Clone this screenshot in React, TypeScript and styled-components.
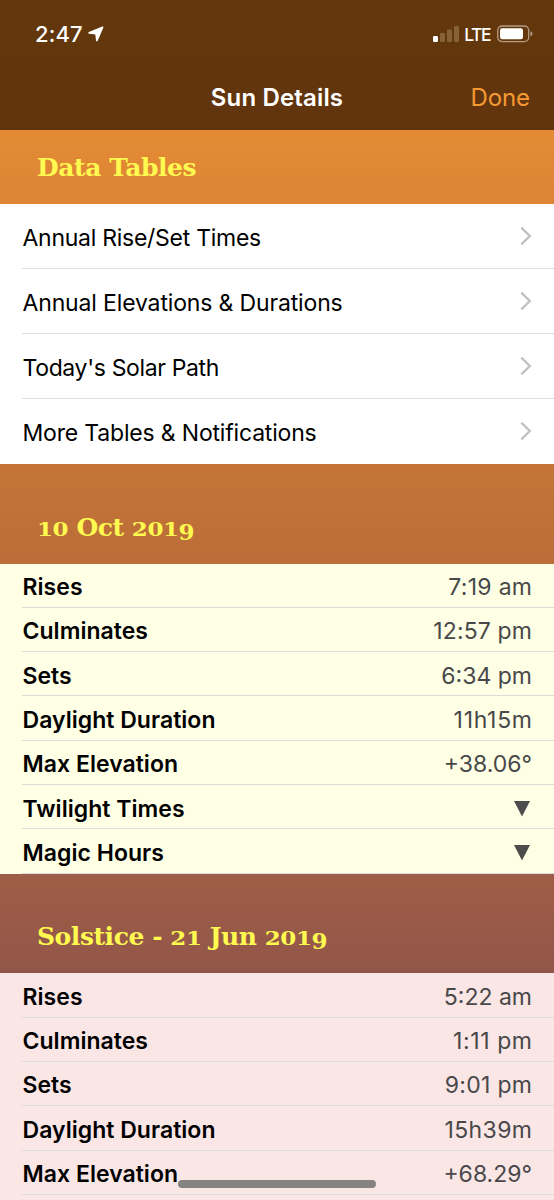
import React from "react";
import styled, { createGlobalStyle } from "styled-components";

const GlobalStyle = createGlobalStyle`
  * { box-sizing: border-box; }
  html, body { margin: 0; padding: 0; height: 1200px; overflow: hidden; }
  body { font-family: Inter, "Liberation Sans", sans-serif; }
`;

const Screen = styled.div`
  position: relative;
  width: 554px;
  height: 1200px;
  overflow: hidden;
  background: linear-gradient(#e88f32 0px, #e38b34 130px, #dd8435 204px, #c47536 464px, #bb6d3a 564px, #9f5d46 874px, #925649 974px, #7d4a50 1200px);
`;

const Header = styled.header`
  height: 130px;
  background: linear-gradient(#64380b, #61340e);
  color: #fff;
`;

const StatusBar = styled.div`
  height: 68px;
  padding: 0 21px 0 35px;
  display: flex;
  justify-content: space-between;
  align-items: center;
`;

const StatusGroup = styled.div`
  display: flex;
  align-items: center;
`;

const Clock = styled.span`
  font-size: 22px;
  font-weight: 500;
  line-height: 26px;
  letter-spacing: 0.15px;
`;

const Network = styled.span`
  font-size: 17.5px;
  font-weight: 500;
  line-height: 22px;
  letter-spacing: -1.5px;
  margin: 1px 7px 0 4px;
`;

const NavBar = styled.div`
  height: 60px;
  padding: 0 24px;
  display: grid;
  grid-template-columns: 1fr auto 1fr;
  align-items: center;
`;

const NavTitle = styled.h1`
  grid-column: 2;
  margin: 0;
  font-size: 24px;
  font-weight: 600;
  line-height: 60px;
  letter-spacing: 0.15px;
`;

const DoneButton = styled.button`
  justify-self: end;
  border: 0;
  padding: 0;
  background: none;
  color: #f59a33;
  font: 400 24px/60px Inter, sans-serif;
  letter-spacing: -0.1px;
`;

const SectionHeader = styled.div<{ $height: number }>`
  height: ${(p) => p.$height}px;
  padding: 0 37px 21px;
  display: flex;
  align-items: flex-end;
`;

const SectionTitle = styled.h2<{ $spacing: number }>`
  margin: 0;
  color: #fffa50;
  font-family: "DejaVu Serif", serif;
  font-size: 25px;
  font-weight: 700;
  line-height: 30px;
  white-space: pre;
  letter-spacing: ${(p) => p.$spacing}px;
`;

/* Old-style figures: 0, 1 and 2 stand at x-height, 9 hangs below the baseline. */
const Digit = styled.span<{ $low: boolean }>`
  display: inline-block;
  font-size: 23px;
  line-height: 23px;
  transform-origin: 0 19px;
  transform: ${(p) => (p.$low ? "translateY(4px)" : "scaleY(0.83)")};
`;

const List = styled.div<{ $tint: string }>`
  background: ${(p) => p.$tint};
  padding-left: 22px;
`;

const MenuRow = styled.div`
  height: 65px;
  padding: 4px 22px 0 0.5px;
  display: flex;
  align-items: center;
  justify-content: space-between;
  border-bottom: 1px solid #dcdce2;
  &:last-child { border-bottom-color: transparent; }
`;

const MenuLabel = styled.span<{ $spacing: number }>`
  font-size: 23px;
  line-height: 28px;
  color: #000;
  letter-spacing: ${(p) => p.$spacing}px;
`;

const DetailRow = styled.div`
  height: 44.3px;
  padding: 3.6px 22px 0 0.5px;
  display: flex;
  align-items: center;
  justify-content: space-between;
  border-bottom: 1px solid #dcdadb;
`;

const DetailLabel = styled.span`
  font-size: 23px;
  font-weight: 600;
  line-height: 28px;
  letter-spacing: 0.03px;
  color: #000;
`;

const DetailValue = styled.span<{ $spacing: number }>`
  font-size: 23px;
  line-height: 28px;
  color: #48484a;
  letter-spacing: ${(p) => p.$spacing}px;
  margin-right: ${(p) => -p.$spacing}px;
`;

const HomeIndicator = styled.div`
  position: absolute;
  left: 178px;
  top: 1180px;
  width: 198px;
  height: 8px;
  border-radius: 4px;
  background: #858382;
`;

const LocationArrow = styled.svg`
  margin-left: 5px;
`;

const ChevronIcon = styled.svg`
  margin-top: -4px;
`;

function Title({ text, spacing }: { text: string; spacing: number }) {
  return (
    <SectionTitle $spacing={spacing}>
      {text.split(/(\d)/).map((part, i) =>
        /^\d$/.test(part) ? (
          <Digit key={i} $low={part === "9"}>{part}</Digit>
        ) : (
          part
        )
      )}
    </SectionTitle>
  );
}

function Chevron() {
  return (
    <ChevronIcon width="12" height="20" viewBox="0 0 12 20">
      <path d="M1.3 1.6 9.8 10 1.3 18.4" fill="none" stroke="#c1c1c4" strokeWidth="2.3" />
    </ChevronIcon>
  );
}

function Triangle() {
  return (
    <svg width="18" height="16" viewBox="0 0 18 16">
      <path d="M0 0H16L8 15.5Z" fill="#4c4c4c" />
    </svg>
  );
}

const menu = [
  { label: "Annual Rise/Set Times", spacing: -0.27 },
  { label: "Annual Elevations & Durations", spacing: -0.15 },
  { label: "Today's Solar Path", spacing: -0.35 },
  { label: "More Tables & Notifications", spacing: -0.18 },
];

type Detail = { label: string; value?: string; spacing?: number };

const today: Detail[] = [
  { label: "Rises", value: "7:19 am", spacing: 0.3 },
  { label: "Culminates", value: "12:57 pm", spacing: 0.15 },
  { label: "Sets", value: "6:34 pm" },
  { label: "Daylight Duration", value: "11h15m", spacing: 0.7 },
  { label: "Max Elevation", value: "+38.06°" },
  { label: "Twilight Times" },
  { label: "Magic Hours" },
];

const solstice: Detail[] = [
  { label: "Rises", value: "5:22 am" },
  { label: "Culminates", value: "1:11 pm", spacing: 0.6 },
  { label: "Sets", value: "9:01 pm", spacing: 0.3 },
  { label: "Daylight Duration", value: "15h39m", spacing: 0.4 },
  { label: "Max Elevation", value: "+68.29°" },
];

function Details({ rows, tint }: { rows: Detail[]; tint: string }) {
  return (
    <List $tint={tint}>
      {rows.map(({ label, value, spacing = 0 }) => (
        <DetailRow key={label}>
          <DetailLabel>{label}</DetailLabel>
          {value ? <DetailValue $spacing={spacing}>{value}</DetailValue> : <Triangle />}
        </DetailRow>
      ))}
    </List>
  );
}

const ListTail = styled.div`
  height: 10px;
  background: #f9e6e5;
`;

export default function App() {
  return (
    <>
      <GlobalStyle />
      <Screen>
        <Header>
          <StatusBar>
            <StatusGroup>
              <Clock>2:47</Clock>
              <LocationArrow width="16" height="16" viewBox="0 0 16 16">
                <path d="M14.3.5.8 5.9C0 6.3.1 7.6 1 7.7L7.3 8.4 8 14.6C8.1 15.6 9.3 15.7 9.7 14.8L15.4 1.6C15.7.8 15 .2 14.3.5Z" fill="#fff" />
              </LocationArrow>
            </StatusGroup>
            <StatusGroup>
              <svg width="27" height="16" viewBox="0 0 27 16">
                <rect x="0" y="10" width="5" height="6" rx="1.2" fill="#fff" />
                <rect x="7" y="7" width="5" height="9" rx="1.2" fill="#866238" />
                <rect x="14" y="3.5" width="5" height="12.5" rx="1.2" fill="#866238" />
                <rect x="21" y="0" width="5" height="16" rx="1.2" fill="#866238" />
              </svg>
              <Network>LTE</Network>
              <svg width="36" height="18" viewBox="0 0 36 18">
                <rect x=".7" y="1" width="31" height="15.6" rx="4.4" fill="none" stroke="#b29c85" strokeWidth="1.3" />
                <rect x="3" y="3.3" width="23" height="11" rx="2.2" fill="#fff" />
                <path d="M33.5 6.2Q35.6 7 35.6 8.8T33.5 11.4Z" fill="#b29c85" />
              </svg>
            </StatusGroup>
          </StatusBar>
          <NavBar>
            <NavTitle>Sun Details</NavTitle>
            <DoneButton>Done</DoneButton>
          </NavBar>
        </Header>
        <SectionHeader $height={74}>
          <Title text="Data Tables" spacing={-0.4} />
        </SectionHeader>
        <List $tint="#fff">
          {menu.map((m) => (
            <MenuRow key={m.label}>
              <MenuLabel $spacing={m.spacing}>{m.label}</MenuLabel>
              <Chevron />
            </MenuRow>
          ))}
        </List>
        <SectionHeader $height={99.6}>
          <Title text="10 Oct 2019" spacing={-0.45} />
        </SectionHeader>
        <Details rows={today} tint="#feffe5" />
        <SectionHeader $height={99.7}>
          <Title text="Solstice - 21 Jun 2019" spacing={-0.45} />
        </SectionHeader>
        <Details rows={solstice} tint="#f9e6e5" />
        <ListTail />
        <HomeIndicator />
      </Screen>
    </>
  );
}
